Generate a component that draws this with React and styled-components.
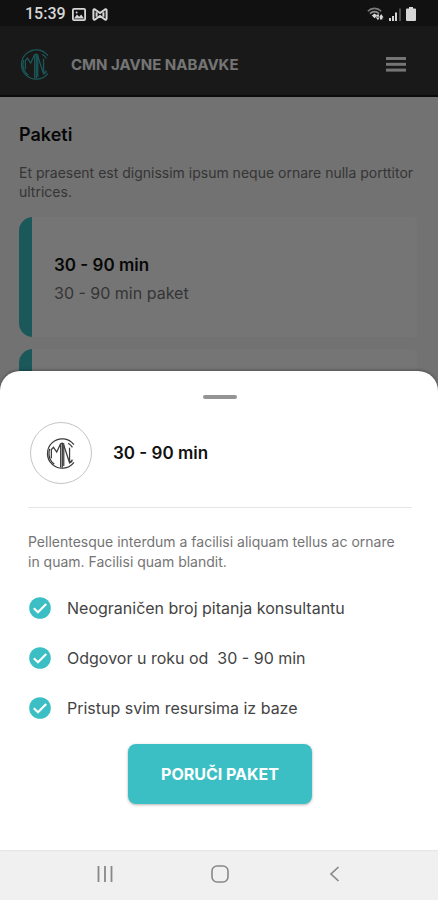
import React from 'react';
import styled, { createGlobalStyle } from 'styled-components';

const GlobalStyle = createGlobalStyle`
  * {
    box-sizing: border-box;
  }

  body {
    margin: 0;
    font-family: Inter, 'Liberation Sans', sans-serif;
    background: #f9f9f9;
  }

  h1,
  h2,
  h3,
  p,
  ul {
    margin: 0;
    padding: 0;
  }
`;

const teal = '#3bbfc4';

const Screen = styled.div`
  display: flex;
  flex-direction: column;
  height: 100vh;
  overflow: hidden;
`;

const StatusBar = styled.div`
  display: flex;
  flex: none;
  align-items: center;
  justify-content: space-between;
  height: 26px;
  padding: 2px 22px 0 25px;
  background: #111111;
  color: #d6d6d6;
`;

const StatusGroup = styled.div`
  display: flex;
  align-items: center;
  gap: ${({ $gap }) => $gap}px;
`;

const Clock = styled.span`
  font: 500 16px/20px Roboto, sans-serif;
`;

const Stage = styled.div`
  position: relative;
  display: flex;
  flex: 1;
  flex-direction: column;
  min-height: 0;
`;

const AppBar = styled.header`
  display: flex;
  flex: none;
  align-items: center;
  gap: 20px;
  height: 71px;
  padding: 8px 28px 0 20px;
  background: #373737;
  border-bottom: 2px solid #181818;
  color: #ffffff;
`;

const AppTitle = styled.h1`
  flex: 1;
  font-size: 15px;
  font-weight: 700;
  line-height: 20px;
`;

const IconButton = styled.button`
  display: flex;
  align-items: center;
  justify-content: center;
  padding: 4px;
  border: 0;
  background: none;
  color: inherit;
`;

const Content = styled.main`
  display: flex;
  flex: 1;
  flex-direction: column;
  min-height: 0;
  padding: 26px 21px 0 19px;
  background: #f9f9f9;
`;

const PageTitle = styled.h2`
  font-size: 18px;
  font-weight: 600;
  line-height: 24px;
  color: #111111;
`;

const Lead = styled.p`
  margin-top: 16px;
  font-size: 14px;
  line-height: 19px;
  color: #747474;
`;

const PackageList = styled.ul`
  display: flex;
  flex-direction: column;
  gap: 12px;
  margin-top: 16px;
  list-style: none;
`;

const PackageCard = styled.li`
  display: flex;
  flex-direction: column;
  justify-content: center;
  gap: 4px;
  height: 120px;
  padding: 4px 16px 0 35px;
  border-radius: 14px 4px 4px 14px;
  background: linear-gradient(to right, ${teal} 13px, #ffffff 13px);
`;

const PackageName = styled.h3`
  font-size: 17px;
  font-weight: 600;
  line-height: 24px;
  color: #111111;
`;

const PackageNote = styled.p`
  font-size: 16px;
  line-height: 24px;
  color: #747474;
`;

const Scrim = styled.div`
  position: absolute;
  inset: 0;
  display: flex;
  flex-direction: column;
  justify-content: flex-end;
  background: rgba(0, 0, 0, 0.54);
`;

const Sheet = styled.section`
  display: flex;
  flex-direction: column;
  padding: 24px 26px 46px 28px;
  border-radius: 20px 20px 0 0;
  background: #ffffff;
  box-shadow: 0 -1px 3px rgba(0, 0, 0, 0.3);
`;

const Handle = styled.div`
  align-self: center;
  width: 34px;
  height: 4px;
  border-radius: 2px;
  background: #949494;
`;

const SheetHeader = styled.div`
  display: flex;
  align-items: center;
  gap: 21px;
  padding: 23px 0 23px 2px;
  border-bottom: 1px solid #e6e6e6;
`;

const Avatar = styled.div`
  display: flex;
  align-items: center;
  justify-content: center;
  width: 62px;
  height: 62px;
  border: 1px solid #c4c4c4;
  border-radius: 50%;
  color: #3c3c3c;
`;

const Description = styled.p`
  margin-top: 24px;
  padding-right: 8px;
  font-size: 14px;
  line-height: 20px;
  color: #747474;
`;

const FeatureList = styled.ul`
  display: flex;
  flex-direction: column;
  gap: 26px;
  margin-top: 24px;
  list-style: none;
`;

const Feature = styled.li`
  display: flex;
  align-items: center;
  gap: 16px;
  padding-left: 1px;
  font-size: 16px;
  line-height: 24px;
  color: #444444;
  white-space: pre;
`;

const OrderButton = styled.button`
  align-self: center;
  height: 60px;
  margin-top: 24px;
  padding: 0 33px;
  border: 0;
  border-radius: 8px;
  background: ${teal};
  box-shadow: 0 1px 3px rgba(0, 0, 0, 0.3);
  color: #ffffff;
  font-family: inherit;
  font-size: 16px;
  font-weight: 700;
  line-height: 20px;
`;

const NavBar = styled.nav`
  display: grid;
  flex: none;
  grid-template-columns: repeat(3, 1fr);
  height: 50px;
  padding: 0 46px 2px 48px;
  background: #f0f0f0;
  color: #888888;
`;

const Logo = ({ size, color }) => (
  <svg width={size} height={size} viewBox="0 0 30 30" fill="none" stroke={color} strokeWidth="1.2">
    <path d="M27 6.5A14.2 14.2 0 1 0 27 23.5" />
    <path d="M25.6 9A12 12 0 0 0 21.5 5M25.6 21A12 12 0 0 1 22.6 24.2" />
    <path d="M3.6 10.5C2.4 14 2.6 19 5.6 23.2L8 25.4" />
    <path d="M5.2 19.5V11.2L7.2 9L10.4 13.6L14.2 5.4V28.5" />
    <path d="M15.8 5V28.5M14.2 5.4L15.8 5L17.2 5.6V27" />
    <path d="M17.2 7L22.8 24L25.4 22.4M22.8 24V9.5" />
  </svg>
);

const CheckBadge = () => (
  <svg width="22" height="22" viewBox="0 0 22 22" fill="none">
    <circle cx="11" cy="11" r="10.8" fill={teal} />
    <path d="M4.8 11.2L9 15.2L17.2 7" stroke="#ffffff" strokeWidth="2.2" />
  </svg>
);

const PictureIcon = () => (
  <svg width="14" height="13" viewBox="0 0 14 13">
    <rect x="0.9" y="0.9" width="12.2" height="11.2" rx="1.2" fill="none" stroke="currentColor" strokeWidth="1.8" />
    <path d="M2 10.5L5 6.6L7.2 8.8L9.2 6.4L12 10.5Z" fill="currentColor" />
    <circle cx="4.6" cy="4.4" r="1" fill="currentColor" />
  </svg>
);

const KnotIcon = () => (
  <svg width="16" height="13" viewBox="0 0 16 13" fill="none" stroke="currentColor" strokeWidth="2">
    <path d="M1.4 2.4C1.4 1.2 2.6 0.9 3.4 1.7L8 5L12.6 1.7C13.4 0.9 14.6 1.2 14.6 2.4V10.6C14.6 11.8 13.4 12.1 12.6 11.3L8 8L3.4 11.3C2.6 12.1 1.4 11.8 1.4 10.6Z" />
    <path d="M4.6 4.2V8.8M11.4 4.2V8.8" />
  </svg>
);

const WifiIcon = () => (
  <svg width="17" height="14" viewBox="0 0 17 14" fill="none">
    <path d="M0.8 4.2C4.6 0.4 10.4 0.4 14.2 4.2" stroke="#7c7c7c" strokeWidth="1.6" />
    <path d="M3 6.6C5.6 4 9.4 4 12 6.6" stroke="#8c8c8c" strokeWidth="1.6" />
    <path d="M4.8 8.4L7.5 6.6L10.2 8.4L7.5 11.2Z" fill="currentColor" />
    <path d="M8.4 9.8L11 13.2L13 9.8ZM11.8 10.4L14.2 7L16.6 10.4ZM13 10H15.4V12.6H13ZM9.6 7.6H12V10.4H9.6Z" fill="currentColor" />
  </svg>
);

const SignalIcon = () => (
  <svg width="12" height="13" viewBox="0 0 12 13">
    <path d="M0 10H2V13H0ZM3 8H5V13H3ZM6 4.5H8V13H6Z" fill="currentColor" />
    <path d="M10.4 0.5H11.6V13H10.4Z" fill="#777777" />
  </svg>
);

const BatteryIcon = () => (
  <svg width="10" height="14" viewBox="0 0 10 14">
    <path d="M3 0H7V1.6H9A1 1 0 0 1 10 2.6V13A1 1 0 0 1 9 14H1A1 1 0 0 1 0 13V2.6A1 1 0 0 1 1 1.6H3Z" fill="currentColor" />
  </svg>
);

const MenuIcon = () => (
  <svg width="20" height="15" viewBox="0 0 20 15" fill="currentColor">
    <rect y="0" width="20" height="3" />
    <rect y="5.8" width="20" height="3" />
    <rect y="11.6" width="20" height="3" />
  </svg>
);

const RecentsIcon = () => (
  <svg width="18" height="18" viewBox="0 0 18 18" stroke="currentColor" strokeWidth="1.8">
    <path d="M2.5 1V17M9 1V17M15.5 1V17" />
  </svg>
);

const HomeIcon = () => (
  <svg width="18" height="18" viewBox="0 0 18 18" fill="none" stroke="currentColor" strokeWidth="1.6">
    <rect x="1" y="1" width="16" height="16" rx="5" />
  </svg>
);

const BackIcon = () => (
  <svg width="18" height="18" viewBox="0 0 18 18" fill="none" stroke="currentColor" strokeWidth="1.7">
    <path d="M12.5 2L5 9L12.5 16" />
  </svg>
);

const packages = [
  { id: 1, name: '30 - 90 min', note: '30 - 90 min paket' },
  { id: 2 },
];

const features = [
  'Neograničen broj pitanja konsultantu',
  'Odgovor u roku od  30 - 90 min',
  'Pristup svim resursima iz baze',
];

const App = () => {
  return (
    <Screen>
      <GlobalStyle />
      <StatusBar>
        <StatusGroup $gap={6}>
          <Clock>15:39</Clock>
          <PictureIcon />
          <KnotIcon />
        </StatusGroup>
        <StatusGroup $gap={5}>
          <WifiIcon />
          <SignalIcon />
          <BatteryIcon />
        </StatusGroup>
      </StatusBar>

      <Stage>
        <AppBar>
          <Logo size={31} color={teal} />
          <AppTitle>CMN JAVNE NABAVKE</AppTitle>
          <IconButton type="button" aria-label="Meni">
            <MenuIcon />
          </IconButton>
        </AppBar>
        <Content>
          <PageTitle>Paketi</PageTitle>
          <Lead>Et praesent est dignissim ipsum neque ornare nulla porttitor ultrices.</Lead>
          <PackageList>
            {packages.map(({ id, name, note }) => (
              <PackageCard key={id}>
                {name && <PackageName>{name}</PackageName>}
                {note && <PackageNote>{note}</PackageNote>}
              </PackageCard>
            ))}
          </PackageList>
        </Content>

        <Scrim>
          <Sheet role="dialog" aria-labelledby="sheet-title">
            <Handle />
            <SheetHeader>
              <Avatar>
                <Logo size={31} color="currentColor" />
              </Avatar>
              <PackageName id="sheet-title">30 - 90 min</PackageName>
            </SheetHeader>
            <Description>
              Pellentesque interdum a facilisi aliquam tellus ac ornare in quam. Facilisi quam blandit.
            </Description>
            <FeatureList>
              {features.map(text => (
                <Feature key={text}>
                  <CheckBadge />
                  {text}
                </Feature>
              ))}
            </FeatureList>
            <OrderButton type="button">PORUČI PAKET</OrderButton>
          </Sheet>
        </Scrim>
      </Stage>

      <NavBar>
        <IconButton type="button" aria-label="Nedavno">
          <RecentsIcon />
        </IconButton>
        <IconButton type="button" aria-label="Početna">
          <HomeIcon />
        </IconButton>
        <IconButton type="button" aria-label="Nazad">
          <BackIcon />
        </IconButton>
      </NavBar>
    </Screen>
  );
};

export default App;
